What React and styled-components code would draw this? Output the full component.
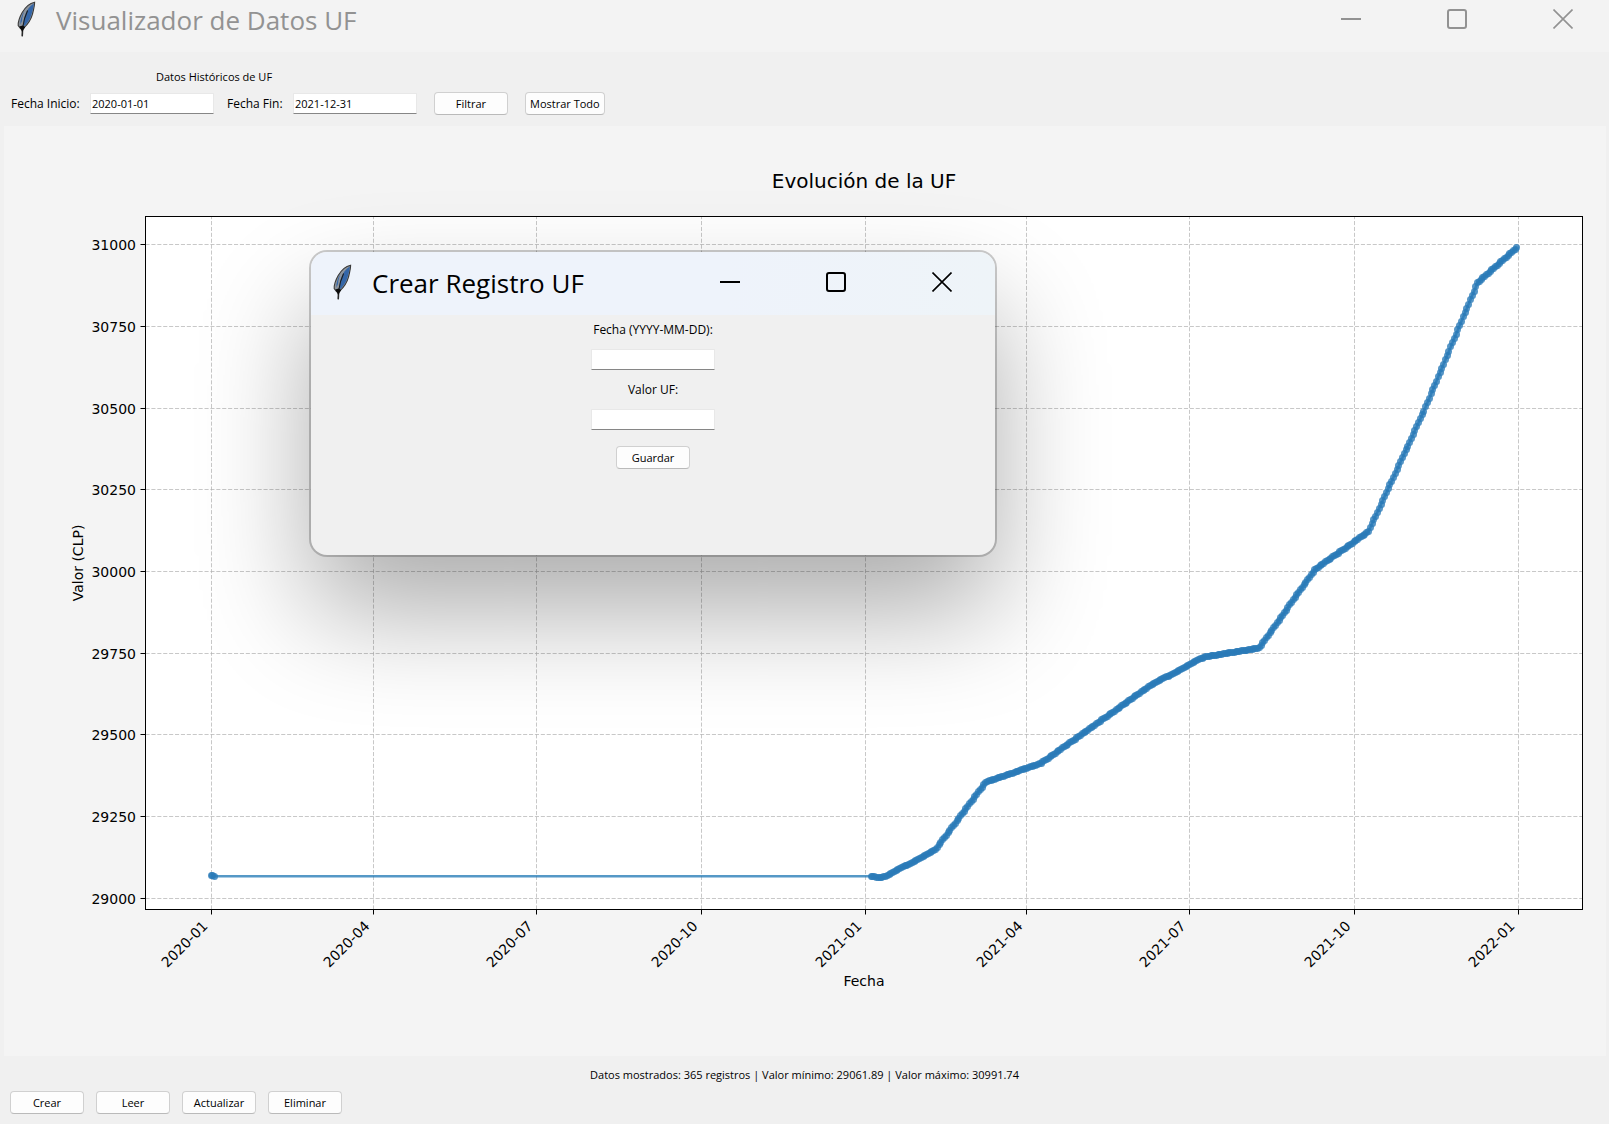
import React from "react";
import styled, { createGlobalStyle } from "styled-components";

const GlobalStyle = createGlobalStyle`
  * { box-sizing: border-box; }
  body { margin: 0; background: #f0f0f0; }
  button, input { font: inherit; color: inherit; }
`;

const Window = styled.div`
  position: relative;
  min-height: 100vh;
  display: flex;
  flex-direction: column;
  background: #f0f0f0;
  color: #000;
  font-family: "Open Sans", "Noto Sans", sans-serif;
  font-size: 11px;
  line-height: 16px;
`;

const TitleBar = styled.header`
  display: flex;
  align-items: center;
  height: 52px;
  padding: 0 36px 14px 17px;
  background: #f3f3f3;
  color: #929292;
`;

const TitleText = styled.h1`
  flex: 1;
  margin: 2px 0 0 19px;
  font-size: 26px;
  line-height: 32px;
  font-weight: 400;
  white-space: nowrap;
`;

const WindowControls = styled.div`
  display: flex;
  gap: 86px;
`;

const ControlButton = styled.button`
  display: block;
  width: 20px;
  height: 20px;
  padding: 0;
  border: 0;
  background: none;

  svg { display: block; }
`;

const Toolbar = styled.form`
  display: flex;
  align-items: flex-end;
  gap: 17px;
  height: 74px;
  padding: 0 11px 11px;
`;

const FilterFields = styled.div`
  display: grid;
  grid-template-columns: 66px 124px 53px 124px;
  align-items: center;
  column-gap: 13px;
  row-gap: 8px;
  padding-bottom: 1px;
`;

const ToolbarHeading = styled.div`
  grid-column: 1 / -1;
  text-align: center;
`;

const Label = styled.label`
  font-size: 12px;
  line-height: 17px;
  white-space: nowrap;
`;

const Entry = styled.input`
  width: 124px;
  height: 21px;
  padding: 0 1px;
  border: 1px solid #e8e8e8;
  border-bottom-color: #868686;
  border-radius: 1px;
  background: #fff;
  outline: none;
`;

const Button = styled.button`
  min-width: 74px;
  height: 23px;
  padding: 0 4px;
  border: 1px solid #d0d0d0;
  border-bottom-color: #bababa;
  border-radius: 4px;
  background: #fdfdfd;
  line-height: 20px;
  white-space: nowrap;
`;

const Figure = styled.main`
  margin: 0 3px 0 4px;
  background: #f4f4f4;

  svg { display: block; width: 100%; height: auto; }
`;

const Footer = styled.footer`
  display: flex;
  flex-direction: column;
  gap: 8px;
  padding: 11px 10px 10px;
`;

const Status = styled.p`
  margin: 0;
  text-align: center;
`;

const FooterActions = styled.div`
  display: flex;
  gap: 12px;
`;

const Dialog = styled.section`
  position: absolute;
  left: 311px;
  top: 252px;
  width: 684px;
  height: 303px;
  border-radius: 16px;
  overflow: hidden;
  background: #f0f0f0;
  box-shadow: 0 0 0 2px rgba(0, 0, 0, 0.2), 0 56px 112px rgba(0, 0, 0, 0.33);
`;

const DialogBar = styled.header`
  display: flex;
  align-items: center;
  height: 63px;
  padding: 0 43px 3px 22px;
  background: linear-gradient(90deg, #eef3fb 60%, #eef4f8);
`;

const DialogForm = styled.form`
  display: flex;
  flex-direction: column;
  align-items: center;
  gap: 11px;
  padding-top: 6px;
`;

const SaveRow = styled.div`
  padding-top: 5px;
`;

const ChartText = styled.text`
  font-family: "DejaVu Sans", sans-serif;
  font-size: ${(p) => (p.$title ? 20 : 14)}px;
  text-anchor: ${(p) => p.$anchor || "middle"};
  fill: #000;
`;

function Feather() {
  return (
    <svg width="20" height="36" viewBox="0 0 20 36" aria-hidden="true">
      <path
        d="M17.6 1.2 C12.6 2.2 8.2 6.2 5.2 11.6 C2.6 16.2 1 20.6 1.2 24.6 L3.6 27.6 L6.4 27.4 C10.6 23.6 14 18.6 15.4 13.4 C16.4 9.2 17.6 5.2 17.6 1.2 Z"
        fill="#8d949c"
        stroke="#3a3a3a"
        strokeWidth="1.1"
      />
      <path
        d="M16.8 2.6 C12.6 5 10 9.4 8.2 13.6 C7 17 6 22 5.6 26.6 C10 23 13.4 18 14.6 13 C15.6 9.2 16.8 6 16.8 2.6 Z"
        fill="#3466a8"
      />
      <path d="M7.4 9.8 C4.8 14 3 19.4 3.4 23.4 L5 20 C5.2 16 6.4 12.6 7.4 9.8 Z" fill="#3466a8" />
      <path d="M10.6 9.6 C8.2 14.6 6.6 20 5.6 27" fill="none" stroke="#1c1c1c" strokeWidth="1.1" />
      <path d="M5.6 27 L5.2 35.4" fill="none" stroke="#2a2a2a" strokeWidth="1.6" />
      <path d="M2.4 25.6 L5.2 31 L8.2 26 L5.6 24.6 Z" fill="#0c0c0c" />
    </svg>
  );
}

function Controls({ owner }) {
  const stroke = { fill: "none", stroke: "currentColor", strokeWidth: 2 };
  return (
    <WindowControls>
      <ControlButton type="button" aria-label={`Minimizar ${owner}`}>
        <svg width="20" height="20"><path d="M0 10H20" {...stroke} /></svg>
      </ControlButton>
      <ControlButton type="button" aria-label={`Maximizar ${owner}`}>
        <svg width="20" height="20"><rect x="1" y="1" width="18" height="18" rx="2" {...stroke} /></svg>
      </ControlButton>
      <ControlButton type="button" aria-label={`Cerrar ${owner}`}>
        <svg width="20" height="20"><path d="M0.5 0.5L19.5 19.5M19.5 0.5L0.5 19.5" {...stroke} strokeWidth="1.6" /></svg>
      </ControlButton>
    </WindowControls>
  );
}

/* Days are counted from 2020-01-01. */
const dateTicks = [
  [0, "2020-01"],
  [91, "2020-04"],
  [182, "2020-07"],
  [274, "2020-10"],
  [366, "2021-01"],
  [456, "2021-04"],
  [547, "2021-07"],
  [639, "2021-10"],
  [731, "2022-01"],
];
const valueTicks = [31000, 30750, 30500, 30250, 30000, 29750, 29500, 29250, 29000];

/* The UF moves at a constant rate between the 9th of one month and the next. */
const knots = [
  [369, 29067], [374, 29061.89], [378, 29069], [405, 29149], [433, 29355], [464, 29413],
  [494, 29530], [525, 29651], [555, 29738], [586, 29766], [617, 30006],
  [647, 30122], [678, 30491], [708, 30884], [730, 30991.74],
];

const plot = { left: 141.5, right: 1578.5, top: 90.5, bottom: 783.5 };
const xOf = (day) => 207 + day * 1.789;
const yOf = (value) => 118.8 + (31000 - value) * 0.3267;
const crisp = (n) => Math.floor(n) + 0.5;

function buildSeries() {
  const series = [[0, 29070], [1, 29069], [2, 29067]];
  for (let i = 0; i < knots.length - 1; i += 1) {
    const [d0, v0] = knots[i];
    const [d1, v1] = knots[i + 1];
    for (let d = d0; d < d1; d += 1) series.push([d, v0 + ((v1 - v0) * (d - d0)) / (d1 - d0)]);
  }
  series.push(knots[knots.length - 1]);
  return series;
}
const series = buildSeries();

function Chart() {
  const centerX = (plot.left + plot.right) / 2;
  const grid = { stroke: "#b0b0b0", strokeOpacity: 0.7, strokeDasharray: "4.1 1.8" };
  return (
    <svg viewBox="0 0 1602 930" role="img" aria-label="Evolución de la UF">
      <rect x={plot.left} y={plot.top} width={plot.right - plot.left} height={plot.bottom - plot.top} fill="#fff" />
      {dateTicks.map(([day, label]) => {
        const x = crisp(xOf(day));
        return (
          <g key={label}>
            <path d={`M${x} ${plot.bottom}V${plot.top}`} {...grid} />
            <path d={`M${x} ${plot.bottom}v5`} stroke="#000" />
            <ChartText $anchor="end" transform={`translate(${x - 3} 801) rotate(-45)`}>{label}</ChartText>
          </g>
        );
      })}
      {valueTicks.map((value) => {
        const y = crisp(yOf(value));
        return (
          <g key={value}>
            <path d={`M${plot.left} ${y}H${plot.right}`} {...grid} />
            <path d={`M${plot.left} ${y}h-5`} stroke="#000" />
            <ChartText $anchor="end" x={132} y={y + 5}>{value}</ChartText>
          </g>
        );
      })}
      <polyline
        points={series.map(([d, v]) => `${xOf(d)},${yOf(v)}`).join(" ")}
        fill="none"
        stroke="#1f77b4"
        strokeOpacity="0.76"
        strokeWidth="2.5"
      />
      {series.map(([d, v]) => (
        <circle key={d} cx={crisp(xOf(d))} cy={crisp(yOf(v))} r="3.5" fill="#2a7ab8" fillOpacity="0.8" />
      ))}
      <rect
        x={plot.left}
        y={plot.top}
        width={plot.right - plot.left}
        height={plot.bottom - plot.top}
        fill="none"
        stroke="#000"
      />
      <ChartText $title x={centerX} y={62}>Evolución de la UF</ChartText>
      <ChartText x={centerX} y={860}>Fecha</ChartText>
      <ChartText transform={`translate(79 ${(plot.top + plot.bottom) / 2}) rotate(-90)`}>Valor (CLP)</ChartText>
    </svg>
  );
}

export default function App() {
  return (
    <>
      <GlobalStyle />
      <Window>
        <TitleBar>
          <Feather />
          <TitleText>Visualizador de Datos UF</TitleText>
          <Controls owner="Visualizador" />
        </TitleBar>

        <Toolbar onSubmit={(e) => e.preventDefault()}>
          <FilterFields>
            <ToolbarHeading>Datos Históricos de UF</ToolbarHeading>
            <Label htmlFor="inicio">Fecha Inicio:</Label>
            <Entry id="inicio" type="text" defaultValue="2020-01-01" />
            <Label htmlFor="fin">Fecha Fin:</Label>
            <Entry id="fin" type="text" defaultValue="2021-12-31" />
          </FilterFields>
          <Button type="submit">Filtrar</Button>
          <Button type="button">Mostrar Todo</Button>
        </Toolbar>

        <Figure>
          <Chart />
        </Figure>

        <Footer>
          <Status>Datos mostrados: 365 registros | Valor mínimo: 29061.89 | Valor máximo: 30991.74</Status>
          <FooterActions>
            {["Crear", "Leer", "Actualizar", "Eliminar"].map((name) => (
              <Button key={name} type="button">{name}</Button>
            ))}
          </FooterActions>
        </Footer>

        <Dialog role="dialog" aria-labelledby="dialog-title">
          <DialogBar>
            <Feather />
            <TitleText as="h2" id="dialog-title">Crear Registro UF</TitleText>
            <Controls owner="Crear Registro" />
          </DialogBar>
          <DialogForm onSubmit={(e) => e.preventDefault()}>
            <Label htmlFor="fecha">Fecha (YYYY-MM-DD):</Label>
            <Entry id="fecha" type="text" />
            <Label htmlFor="valor">Valor UF:</Label>
            <Entry id="valor" type="text" />
            <SaveRow>
              <Button type="submit">Guardar</Button>
            </SaveRow>
          </DialogForm>
        </Dialog>
      </Window>
    </>
  );
}
